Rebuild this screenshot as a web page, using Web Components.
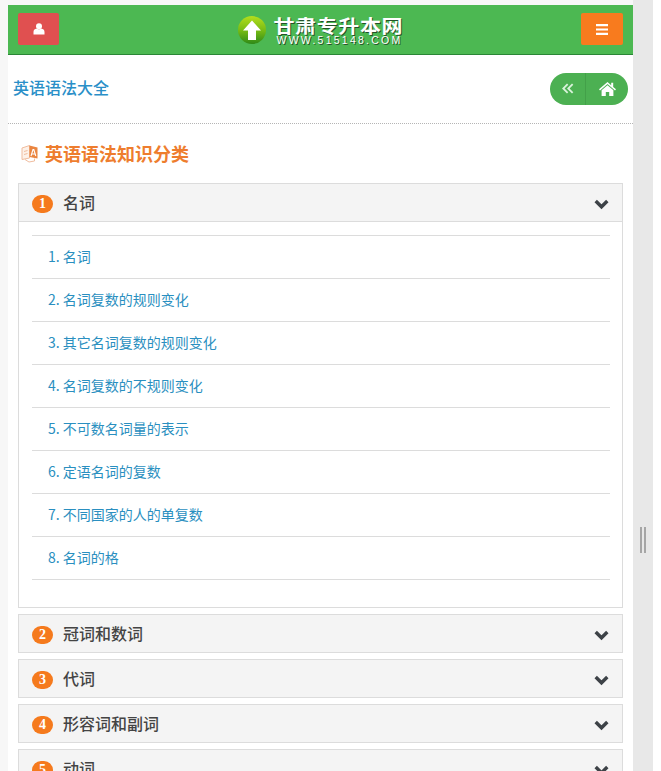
<!DOCTYPE html>
<html lang="zh"><head><meta charset="utf-8"><title>英语语法大全</title>
<style>
html,body{margin:0;height:771px;overflow:hidden;background:#fff}
body{font-family:"Noto Sans CJK SC","Noto Sans",sans-serif}
</style></head><body>
<app-shell>
  <top-bar></top-bar>
  <title-bar>英语语法大全</title-bar>
  <section-title>英语语法知识分类</section-title>
  <acc-panel num="1" label="名词" open>
    <topic-link>1. 名词</topic-link>
    <topic-link>2. 名词复数的规则变化</topic-link>
    <topic-link>3. 其它名词复数的规则变化</topic-link>
    <topic-link>4. 名词复数的不规则变化</topic-link>
    <topic-link>5. 不可数名词量的表示</topic-link>
    <topic-link>6. 定语名词的复数</topic-link>
    <topic-link>7. 不同国家的人的单复数</topic-link>
    <topic-link>8. 名词的格</topic-link>
  </acc-panel>
  <acc-panel num="2" label="冠词和数词"></acc-panel>
  <acc-panel num="3" label="代词"></acc-panel>
  <acc-panel num="4" label="形容词和副词"></acc-panel>
  <acc-panel num="5" label="动词"></acc-panel>
</app-shell>
<script>
function def(name,html,init){
  customElements.define(name,class extends HTMLElement{
    constructor(){super();this.attachShadow({mode:"open"}).innerHTML=html;}
    connectedCallback(){if(init)init(this);}
  });
}
def("app-shell",`<style>
:host{display:grid;grid-template-columns:8px 625px 20px 8px;height:771px;overflow:hidden}
.gut{background:#f7f7f7}
.main{padding-top:5px;background:linear-gradient(#f7f7f7 5px,#fff 5px);min-width:0}
.rail{background:#e8e8e8;display:flex;justify-content:center;gap:2px;padding-top:527px;box-sizing:border-box}
.rail i{display:block;width:2px;height:26px;background:#a6a6a6}
.edge{background:#fff}
</style><div class="gut"></div><div class="main"><slot></slot></div><div class="rail"><i></i><i></i></div><div class="edge"></div>`);

def("top-bar",`<style>
:host{display:flex;box-sizing:border-box;height:50px;background:#4cb852;border-bottom:1px solid #2a8636;padding:8px 10px 0;justify-content:space-between;align-items:flex-start}
.btn{width:41px;height:32px;border-radius:2px;display:flex;align-items:center;justify-content:center}
.red{background:#e05050}.org{background:#f87b1e;width:42px}
.logo{display:flex;align-items:center;gap:7px;margin-top:2px}
.txt{display:flex;flex-direction:column;color:#fff;text-shadow:1px 1px 0 #24502a;width:130px;height:30px}
.cn{font:700 21px/18px "Noto Sans CJK SC",sans-serif;letter-spacing:.6px;white-space:nowrap;transform:scaleY(.85);transform-origin:0 50%;margin-top:1px}
.en{font:400 10.5px/11px "Liberation Sans",sans-serif;letter-spacing:2.25px;white-space:nowrap;margin:1px 0 0 3px}
</style>
<div class="btn red"><svg width="12" height="12" viewBox="0 0 12 12"><circle cx="6" cy="3.2" r="3" fill="#fff"/><path d="M.5 11.5V9C.5 7 2 6 3.6 5.6 4.5 6.5 7.5 6.5 8.4 5.6 10 6 11.5 7 11.5 9v2.5z" fill="#fff"/></svg></div>
<div class="logo">
<svg width="30" height="30" viewBox="0 0 30 30"><defs><linearGradient id="g" x1="0" y1="0" x2="0" y2="1"><stop offset="0" stop-color="#b4de1c"/><stop offset=".55" stop-color="#72b814"/><stop offset="1" stop-color="#2e8a18"/></linearGradient></defs><circle cx="15" cy="15" r="14" fill="url(#g)"/><path d="M15 5.500 24 15.500H19V25H11V15.500H6z" fill="#fff"/></svg>
<div class="txt"><span class="cn">甘肃专升本网</span><span class="en">WWW.515148.COM</span></div>
</div>
<div class="btn org"><svg width="12" height="11" viewBox="0 0 12 11"><path d="M0 0h12v2.200H0zM0 4.400h12v2.200H0zM0 8.800h12V11H0z" fill="#fff"/></svg></div>`);

def("title-bar",`<style>
:host{display:flex;box-sizing:border-box;height:69px;border-bottom:1px dotted #b5b5b5;align-items:center;justify-content:space-between;padding:0 5px;color:#2a8fc8;font:500 16px/24px "Noto Sans CJK SC",sans-serif}
.t{margin-bottom:4px}
.grp{display:flex;height:32px;width:78px;background:#4cb052;border-radius:16px;margin-bottom:1px}
.grp div{display:flex;align-items:center;justify-content:center}
.a{width:35px;border-right:1px solid #43a049}.b{flex:1}
</style><span class="t"><slot></slot></span>
<div class="grp"><div class="a"><svg width="12" height="11" viewBox="0 0 12 11"><path d="M5 .5 0 5.500 5 10.500 6.300 9.200 2.600 5.500 6.300 1.800z M10 .5 5 5.500 10 10.500 11.300 9.200 7.600 5.500 11.300 1.800z" fill="#d9f2da"/></svg></div>
<div class="b"><svg width="17" height="14" viewBox="0 0 17 14"><path d="M8.500 0 0 7.300l1 1.100L8.500 2l7.500 6.400 1-1.100-2.800-2.400V.8h-2v2.400z" fill="#fff"/><path d="M8.500 3.300 2.600 8.300V14h4.200v-4h3.400v4h4.200V8.300z" fill="#fff"/></svg></div></div>`);

def("section-title",`<style>
:host{display:flex;align-items:center;gap:6px;box-sizing:border-box;height:59px;padding:0 0 2px 12px;color:#ee7d2e;font:700 18px/24px "Noto Sans CJK SC",sans-serif}
svg{flex:none;margin-top:2px}
</style><svg width="19" height="19" viewBox="0 0 19 19" fill="none"><path d="M2 4 9.500 1.500V14L2 15.500z" fill="#fdf1e8" stroke="#f0bd9f"/><path d="M4 7.500l3.500-1M4 10.500l3.500-1" stroke="#f0bd9f"/><path d="M9.500 1.500 17.500 3.500V14.500L9.500 13z" fill="#ea8540"/><path d="M11 12 13 5.500h.8l2 6.500M11.800 10h3.200" stroke="#fff" stroke-width="1.100"/><path d="M5 15.500 9 18 14.500 17V14.500" stroke="#f0bd9f"/></svg><span><slot></slot></span>`);

def("acc-panel",`<style>
:host{display:block;margin:0 10px 6px;border:1px solid #dcdcdc;box-sizing:border-box}
.hd{display:flex;align-items:center;height:37px;background:#f4f4f4;padding:0 13px;color:#444;font:500 16px/24px "Noto Sans CJK SC",sans-serif;gap:10px}
.n{flex:none;width:21px;height:18px;margin-top:3px;border-radius:9px;background:#f57a1d;color:#fff;display:flex;align-items:center;justify-content:center;font:700 14px/18px "Liberation Serif",serif}
.l{flex:1;margin-top:-2px}
svg{margin-top:4px}
.bd{display:none;border-top:1px solid #dcdcdc;padding:13px 12px 27px 13px}
:host([open]) .bd{display:block}
.rule{border-top:1px solid #dcdcdc}
</style><div class="hd"><span class="n"></span><span class="l"></span><svg width="15" height="11" viewBox="0 0 15 11"><path d="M1.700 2 7.500 7.800 13.300 2" fill="none" stroke="#3d4247" stroke-width="3.400"/></svg></div><div class="bd"><div class="rule"></div><slot></slot></div>`,
el=>{el.shadowRoot.querySelector(".n").textContent=el.getAttribute("num");el.shadowRoot.querySelector(".l").textContent=el.getAttribute("label");});

def("topic-link",`<style>
:host{display:flex;align-items:center;box-sizing:border-box;height:43px;border-bottom:1px solid #dcdcdc;padding:0 0 2px 16px;color:#2a8fc0;font:400 14px/20px "Noto Sans CJK SC",sans-serif}
</style><slot></slot>`);
</script>
</body></html>
